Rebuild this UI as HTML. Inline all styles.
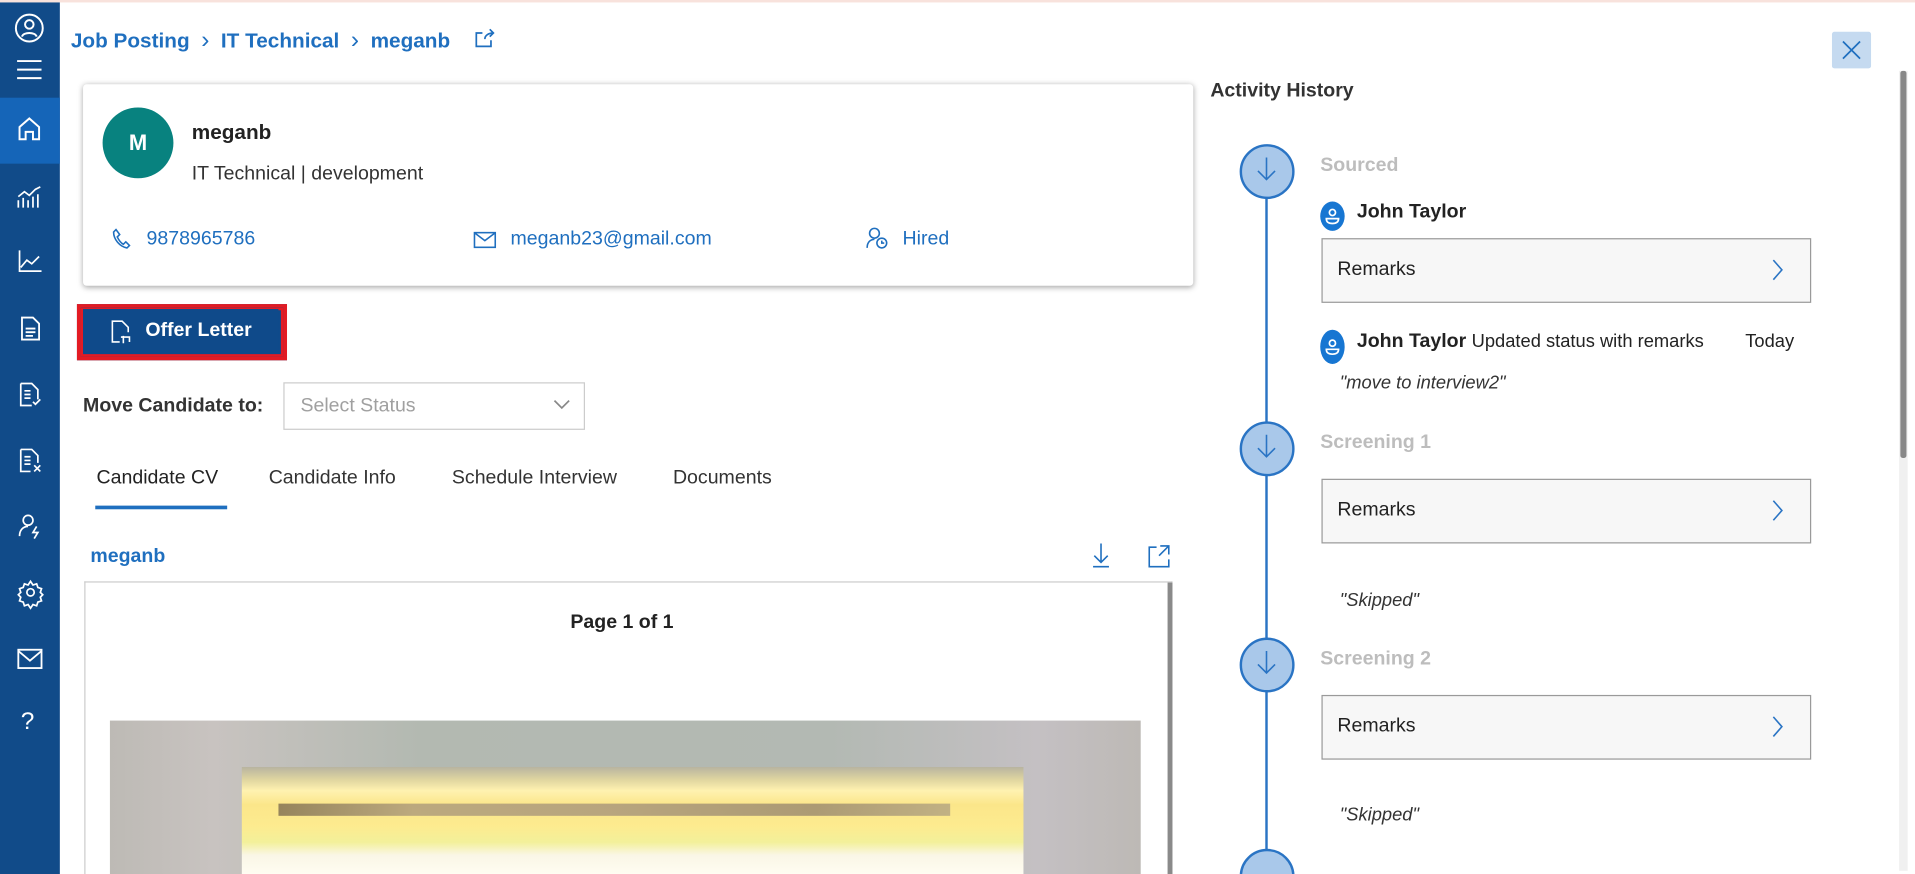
<!DOCTYPE html>
<html><head><meta charset="utf-8">
<style>
html,body{margin:0;padding:0;width:1915px;height:874px;overflow:hidden;background:#fff}
#w{position:absolute;left:0;top:0;width:1568px;height:716px;overflow:hidden;transform:scale(1.22131);transform-origin:0 0;font-family:"Liberation Sans",sans-serif;color:#333}
.a{position:absolute;white-space:nowrap}
.blue{color:#1f6fbf}
svg{position:absolute;overflow:visible}
.box{position:absolute;left:1082px;width:399px;height:51px;background:#f7f7f7;border:1px solid #9a9a9a}
.box span{position:absolute;left:12px;top:16px;font-size:16px;color:#222}
.circ{position:absolute;left:1015px;width:41px;height:41px;border-radius:50%;background:#a9c8ea;border:2px solid #2a74c4}
.st{position:absolute;left:1081px;font-size:16px;font-weight:bold;color:#bdbdbd}
.it{position:absolute;left:1097px;font-size:15px;font-style:italic;color:#333}
</style></head><body><div id="w">
<div class="a" style="left:0;top:0;width:1568px;height:2px;background:#f8e2dc"></div>
<div class="a" style="left:0;top:2px;width:49px;height:714px;background:#114b89"></div>
<div class="a" style="left:0;top:80px;width:49px;height:54px;background:#1565b8"></div>
<svg style="left:12px;top:11px" width="24" height="24" viewBox="0 0 24 24" fill="none" stroke="#fff" stroke-width="1.6"><circle cx="12" cy="12" r="11"/><circle cx="12" cy="9" r="3.5"/><path d="M6 19c1-4 11-4 12 0"/></svg>
<svg style="left:14px;top:49px" width="20" height="16" fill="none" stroke="#fff" stroke-width="1.6"><path d="M0 1h20M0 8h20M0 15h20"/></svg>
<svg style="left:15px;top:96px" width="18" height="19" fill="none" stroke="#fff" stroke-width="1.6"><path d="M1 8L9 1l8 7v10h-5v-6H6v6H1z"/></svg>
<svg style="left:14px;top:151px" width="21" height="20" fill="none" stroke="#fff" stroke-width="1.4"><path d="M1 19v-6M5 19v-8M9 19v-6M13 19v-9M17 19v-11M1 10l5-4 4 3 5-5 4-2"/></svg>
<svg style="left:15px;top:205px" width="19" height="18" fill="none" stroke="#fff" stroke-width="1.4"><path d="M1 0v17h18M2 14l5-6 4 3 6-6"/></svg>
<svg style="left:17px;top:259px" width="16" height="20" fill="none" stroke="#fff" stroke-width="1.5"><path d="M1 1h9l5 5v13H1zM4 10h8M4 13h8M4 16h6"/></svg>
<svg style="left:16px;top:313px" width="19" height="20" fill="none" stroke="#fff" stroke-width="1.4"><path d="M1 1h9l5 5v8M1 1v18h9M4 7h5M4 10h5M4 13h5M11 16l2 2 4-4"/></svg>
<svg style="left:16px;top:367px" width="19" height="20" fill="none" stroke="#fff" stroke-width="1.4"><path d="M1 1h9l5 5v6M1 1v18h8M4 7h5M4 10h5M4 13h5M12 14l5 5M17 14l-5 5"/></svg>
<svg style="left:15px;top:421px" width="20" height="20" fill="none" stroke="#fff" stroke-width="1.4"><circle cx="8" cy="5" r="4"/><path d="M1 18c0-5 3-8 7-8M15 10l-3 5h4l-3 5"/></svg>
<svg style="left:15px;top:475px" width="20" height="20" fill="none" stroke="#fff" stroke-width="1.4"><circle cx="10" cy="10" r="3"/><path d="M10 1l2 3 3-1 1 3 3 1-1 3 2 2-2 2 1 3-3 1-1 3-3-1-2 3-2-3-3 1-1-3-3-1 1-3-2-2 2-2-1-3 3-1 1-3 3 1z"/></svg>
<svg style="left:14px;top:531px" width="21" height="17" fill="none" stroke="#fff" stroke-width="1.5"><rect x="1" y="1" width="19" height="15"/><path d="M1 2l9.5 8L20 2"/></svg>
<div class="a" style="left:17px;top:580px;color:#fff;font-size:20px">?</div>
<div class="a blue" style="left:58px;top:22px;font-size:17px;font-weight:bold">Job Posting&nbsp;&nbsp;<span style="font-weight:normal;font-size:20px">›</span>&nbsp;&nbsp;IT Technical&nbsp;&nbsp;<span style="font-weight:normal;font-size:20px">›</span>&nbsp;&nbsp;meganb</div>
<svg style="left:389px;top:24px" width="16" height="15" fill="none" stroke="#1f6fbf" stroke-width="1.4"><path d="M6 3H1v11h12V9M8 8c0-3 3-5 7-5M12 0l3 3-3 3"/></svg>
<div class="a" style="left:1500px;top:26px;width:32px;height:30px;background:#c5daf0;border-radius:2px"></div>
<svg style="left:1509px;top:34px" width="14" height="14" stroke="#1f6fbf" stroke-width="1.4"><path d="M0 0l14 14M14 0L0 14"/></svg>
<div class="a" style="left:68px;top:69px;width:909px;height:165px;background:#fff;border-radius:3px;box-shadow:0 1px 5px rgba(0,0,0,.35)"></div>
<div class="a" style="left:84px;top:88px;width:58px;height:58px;border-radius:50%;background:#08827f;color:#fff;font-size:18px;font-weight:bold;text-align:center;line-height:58px">M</div>
<div class="a" style="left:157px;top:99px;font-size:17px;font-weight:bold;color:#222">meganb</div>
<div class="a" style="left:157px;top:134px;font-size:16px;color:#333">IT Technical | development</div>
<svg style="left:92px;top:187px" width="14" height="17" fill="none" stroke="#1f6fbf" stroke-width="1.3"><path d="M3 1L1 3c0 6 5 12 11 13l2-2-3-3-2 2c-2-1-4-4-5-6l2-2z"/></svg>
<div class="a blue" style="left:120px;top:187px;font-size:16px">9878965786</div>
<svg style="left:388px;top:190px" width="18" height="13" fill="none" stroke="#1f6fbf" stroke-width="1.3"><rect x=".5" y=".5" width="17" height="12"/><path d="M1 1l8 6 8-6"/></svg>
<div class="a blue" style="left:418px;top:187px;font-size:16px">meganb23@gmail.com</div>
<svg style="left:709px;top:186px" width="18" height="18" fill="none" stroke="#1f6fbf" stroke-width="1.3"><circle cx="7" cy="5" r="4"/><path d="M1 17c0-5 3-7 6-7"/><circle cx="13" cy="13" r="4"/><path d="M13 11v2h2"/></svg>
<div class="a blue" style="left:739px;top:187px;font-size:16px">Hired</div>
<div class="a" style="left:63px;top:249px;width:166px;height:40px;border:3px solid #e31b23;background:#0f4a8a;box-shadow:inset 0 0 0 2px #e31b23"></div>
<div class="a" style="left:68px;top:253px;width:160px;height:36px;background:#0f4a8a"></div>
<svg style="left:91px;top:262px" width="17" height="19" fill="none" stroke="#fff" stroke-width="1.3"><path d="M7 18H1V1h8l5 5v4M8 14h7v4M10 13v6"/></svg>
<div class="a" style="left:119px;top:262px;font-size:16px;font-weight:bold;color:#fff">Offer Letter</div>
<div class="a" style="left:68px;top:324px;font-size:16px;font-weight:bold;color:#333">Move Candidate to:</div>
<div class="a" style="left:232px;top:313px;width:245px;height:37px;border:1px solid #ccc"></div>
<div class="a" style="left:246px;top:324px;font-size:16px;color:#a0a0a0">Select Status</div>
<svg style="left:454px;top:328px" width="12" height="7" fill="none" stroke="#888" stroke-width="1.4"><path d="M0 0l6 6 6-6"/></svg>
<div class="a" style="left:79px;top:383px;font-size:16px;color:#222">Candidate CV</div>
<div class="a" style="left:220px;top:383px;font-size:16px;color:#333">Candidate Info</div>
<div class="a" style="left:370px;top:383px;font-size:16px;color:#333">Schedule Interview</div>
<div class="a" style="left:551px;top:383px;font-size:16px;color:#333">Documents</div>
<div class="a" style="left:78px;top:414px;width:108px;height:3px;background:#1f6fbf"></div>
<div class="a blue" style="left:74px;top:447px;font-size:16px;font-weight:bold">meganb</div>
<svg style="left:894px;top:445px" width="15" height="20" fill="none" stroke="#1f6fbf" stroke-width="1.3"><path d="M7.5 0v15M2 10l5.5 5.5L13 10M1 19h13"/></svg>
<svg style="left:940px;top:446px" width="18" height="19" fill="none" stroke="#1f6fbf" stroke-width="1.3"><path d="M7 2H1v16h16v-6M10 1h7v7M17 1L9 9"/></svg>
<div class="a" style="left:69px;top:476px;width:889px;height:240px;border:1px solid #ccc;border-bottom:none;background:#fff"></div>
<div class="a" style="left:956px;top:477px;width:4px;height:239px;background:#8a8a8a"></div>
<div class="a" style="left:467px;top:501px;font-size:16px;font-weight:bold;color:#222">Page 1 of 1</div>
<div class="a" style="left:90px;top:590px;width:844px;height:126px;background:linear-gradient(90deg,#bdbab5 0,#c8c3c0 10%,#b3b9b1 30%,#b3b9b3 70%,#c4c0c3 90%,#bdb9b5 100%)"></div>
<div class="a" style="left:198px;top:628px;width:640px;height:88px;background:linear-gradient(#b8b4a0 0,#e0d6a0 12%,#fff2b0 22%,#fbe68a 35%,#fdeb8f 55%,#f3f09a 70%,#faf6e6 82%,#fffdf2 100%)"></div>
<div class="a" style="left:228px;top:658px;width:550px;height:10px;background:linear-gradient(90deg,#6a5a48,#a08e78 20%,#9a8878 50%,#8a7a6a 80%,#a89a80);opacity:.7"></div>
<div class="a" style="left:991px;top:66px;font-size:16px;font-weight:bold;color:#333">Activity History</div>
<div class="a" style="left:1036px;top:140px;width:2px;height:576px;background:#2a74c4"></div>
<div class="circ" style="top:118px"></div>
<div class="circ" style="top:345px"></div>
<div class="circ" style="top:522px"></div>
<div class="circ" style="top:695px"></div>
<svg style="left:1029px;top:129px" width="16" height="20" fill="none" stroke="#2a74c4" stroke-width="1.3"><path d="M8 0v18M1 11l7 7 7-7"/></svg>
<svg style="left:1029px;top:356px" width="16" height="20" fill="none" stroke="#2a74c4" stroke-width="1.3"><path d="M8 0v18M1 11l7 7 7-7"/></svg>
<svg style="left:1029px;top:533px" width="16" height="20" fill="none" stroke="#2a74c4" stroke-width="1.3"><path d="M8 0v18M1 11l7 7 7-7"/></svg>
<div class="st" style="top:127px">Sourced</div>
<div class="a" style="left:1081px;top:165px;width:20px;height:24px;border-radius:50%;background:#1776d2"></div>
<svg style="left:1085px;top:170px" width="12" height="14" fill="none" stroke="#fff" stroke-width="1.4"><circle cx="6" cy="4" r="2.5"/><path d="M1 9h10c0 3-2 4-5 4s-5-1-5-4z"/></svg>
<div class="a" style="left:1111px;top:165px;font-size:16px;font-weight:bold;color:#222">John Taylor</div>
<div class="box" style="top:195px"><span>Remarks</span></div>
<svg style="left:1452px;top:213px" width="8" height="16" fill="none" stroke="#2a74c4" stroke-width="1.3"><path d="M0 0l7 8-7 8"/></svg>
<div class="a" style="left:1081px;top:270px;width:20px;height:28px;border-radius:50%;background:#1776d2"></div>
<svg style="left:1085px;top:277px" width="12" height="14" fill="none" stroke="#fff" stroke-width="1.4"><circle cx="6" cy="4" r="2.5"/><path d="M1 9h10c0 3-2 4-5 4s-5-1-5-4z"/></svg>
<div class="a" style="left:1111px;top:271px;font-size:16px;color:#222"><b>John Taylor</b> <span style="font-size:15px">Updated status with remarks</span></div>
<div class="a" style="left:1429px;top:271px;font-size:15px;color:#222">Today</div>
<div class="it" style="top:305px">"move to interview2"</div>
<div class="st" style="top:354px">Screening 1</div>
<div class="box" style="top:392px"><span>Remarks</span></div>
<svg style="left:1452px;top:410px" width="8" height="16" fill="none" stroke="#2a74c4" stroke-width="1.3"><path d="M0 0l7 8-7 8"/></svg>
<div class="it" style="top:483px">"Skipped"</div>
<div class="st" style="top:531px">Screening 2</div>
<div class="box" style="top:569px"><span>Remarks</span></div>
<svg style="left:1452px;top:587px" width="8" height="16" fill="none" stroke="#2a74c4" stroke-width="1.3"><path d="M0 0l7 8-7 8"/></svg>
<div class="it" style="top:659px">"Skipped"</div>
<div class="a" style="left:1555px;top:58px;width:7px;height:655px;background:#f0f0f0"></div>
<div class="a" style="left:1556px;top:58px;width:5px;height:317px;background:#888;border-radius:2px"></div>
</div></body></html>
